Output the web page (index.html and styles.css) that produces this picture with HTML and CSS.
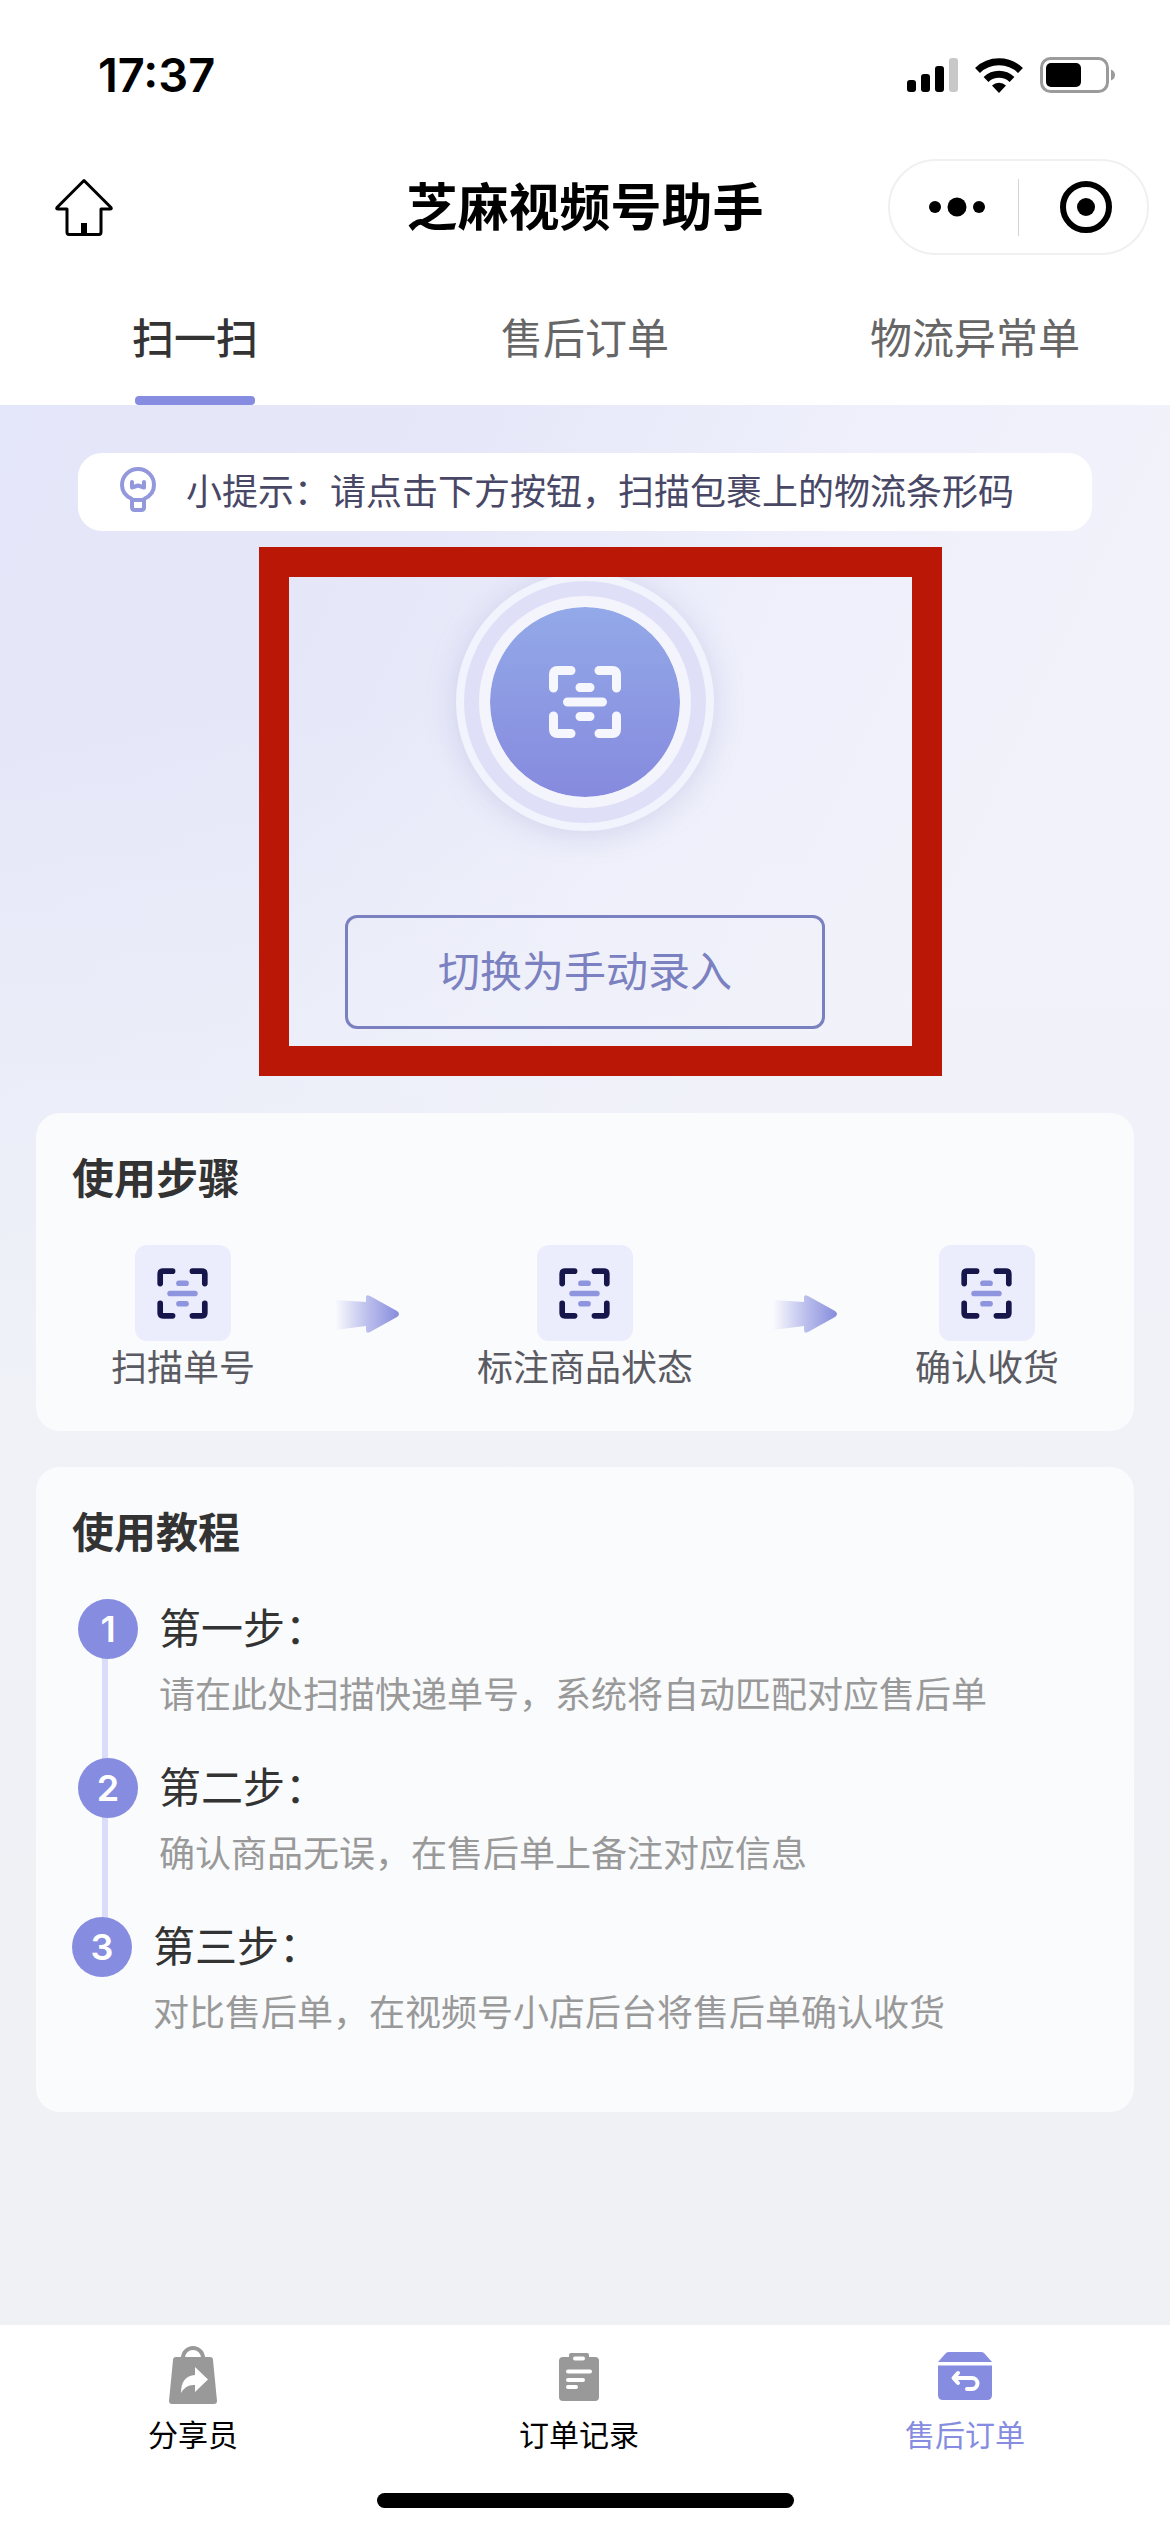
FILE: index.html
```html
<!DOCTYPE html>
<html lang="zh-CN">
<head>
<meta charset="utf-8">
<meta name="viewport" content="width=device-width, initial-scale=1">
<title>芝麻视频号助手</title>
<link rel="stylesheet" href="styles.css">
</head>
<body>
<svg class="sprite" aria-hidden="true">
  <symbol id="scan" viewBox="0 0 72 72">
    <g class="scan-corners" fill="none" stroke-linecap="round" stroke-linejoin="round">
      <path d="M4.500 22V8.500Q4.500 4.500 8.500 4.500H22"/>
      <path d="M50 4.500H63.500Q67.500 4.500 67.500 8.500V22"/>
      <path d="M67.500 50V63.500Q67.500 67.500 63.500 67.500H50"/>
      <path d="M22 67.500H8.500Q4.500 67.500 4.500 63.500V50"/>
    </g>
    <g class="scan-bars" fill="none" stroke-linecap="round">
      <path d="M31 21.500H41M18.500 36H53.500M31 50.500H41"/>
    </g>
  </symbol>
  <symbol id="arrow" viewBox="0 0 66 54">
    <path fill="url(#arrow-fade)" d="M2 7L33 9V4Q33 1 37 3L64 18Q68 21 64 24L37 39Q33 41 33 37V33L2 37Z"/>
  </symbol>
  <defs>
    <linearGradient id="arrow-fade" x1="0" x2="1" y1="0" y2="0">
      <stop offset="0" stop-color="#8a8fdf" stop-opacity="0"/>
      <stop offset=".5" stop-color="#8a90df" stop-opacity=".55"/>
      <stop offset="1" stop-color="#868cdc"/>
    </linearGradient>
  </defs>
</svg>

<header class="top">
  <div class="status">
    <time class="clock">17:37</time>
    <div class="status-icons">
      <svg width="51" height="36" viewBox="0 0 51 36" aria-label="信号">
        <rect x="0" y="23" width="9" height="12" rx="3"/>
        <rect x="14" y="17" width="9" height="18" rx="3"/>
        <rect x="28" y="9" width="9" height="26" rx="3"/>
        <rect x="42" y="1" width="9" height="34" rx="3" fill="#c8c8c8"/>
      </svg>
      <svg width="48" height="36" viewBox="0 0 48 36" aria-label="无线网络">
        <g fill="none" stroke="#000" stroke-width="7">
          <path d="M2.500 13.500A31 31 0 0 1 45.500 13.500"/>
          <path d="M11 22.500A19 19 0 0 1 37 22.500"/>
        </g>
        <path d="M24 36L17 28.500A10 10 0 0 1 31 28.500Z"/>
      </svg>
      <svg width="76" height="36" viewBox="0 0 76 36" aria-label="电池">
        <rect x="1.500" y="1.500" width="66" height="33" rx="9" fill="none" stroke="#9b9b9b" stroke-width="3"/>
        <rect x="6" y="6" width="35" height="24" rx="5"/>
        <path d="M71 12.500Q75 14 75 18T71 23.500Z" fill="#9b9b9b"/>
      </svg>
    </div>
  </div>
  <div class="nav">
    <button class="icon-button" type="button" aria-label="首页">
      <svg width="60" height="60" viewBox="0 0 60 60" fill="none" stroke="#000" stroke-width="3" stroke-linejoin="round">
        <path d="M30 3.500L57 30.500Q58 32 56 32H47V55Q47 57.500 45 57.500H15Q13 57.500 13 55V32H4Q2 32 3 30.500Z"/>
        <path d="M30 46V57" stroke-width="6"/>
      </svg>
    </button>
    <h1 class="nav-title">芝麻视频号助手</h1>
    <div class="capsule">
      <button class="capsule-button" type="button" aria-label="更多">
        <svg width="60" height="60" viewBox="0 0 60 60"><circle cx="8" cy="30" r="6"/><circle cx="30" cy="30" r="9.500"/><circle cx="52" cy="30" r="6"/></svg>
      </button>
      <button class="capsule-button" type="button" aria-label="关闭">
        <svg width="60" height="60" viewBox="0 0 60 60"><circle cx="30" cy="30" r="23" fill="none" stroke="#000" stroke-width="6"/><circle cx="30" cy="30" r="9"/></svg>
      </button>
    </div>
  </div>
  <nav class="tabs">
    <a class="tab tab-active" href="#scan-page">扫一扫</a>
    <a class="tab" href="#orders">售后订单</a>
    <a class="tab" href="#abnormal">物流异常单</a>
  </nav>
</header>

<main class="page" id="scan-page">
  <p class="tip">
    <svg width="36" height="45" viewBox="0 0 36 45" fill="none" stroke="#9398dd" stroke-width="4" stroke-linejoin="round" stroke-linecap="round">
      <path d="M12 32Q2 27.500 2 18A16 16 0 0 1 34 18Q34 27.500 24 32"/>
      <path d="M12 33H24V40Q24 43 21.500 43H14.500Q12 43 12 40Z"/>
      <path d="M12 15V20.500L18 18.500L24 20.500V15"/>
    </svg>
    <span>小提示：请点击下方按钮，扫描包裹上的物流条形码</span>
  </p>

  <section class="scanner">
    <button class="scan-button" type="button" aria-label="扫描">
      <span class="scan-core"><svg class="scan-icon" width="72" height="72"><use href="#scan"/></svg></span>
    </button>
    <button class="manual-button" type="button">切换为手动录入</button>
    <div class="highlight"></div>
  </section>

  <section class="card">
    <h2 class="card-title">使用步骤</h2>
    <div class="flow">
      <div class="flow-item">
        <span class="tile"><svg class="tile-icon" width="51" height="51"><use href="#scan"/></svg></span>
        <span>扫描单号</span>
      </div>
      <svg width="66" height="54"><use href="#arrow"/></svg>
      <div class="flow-item">
        <span class="tile"><svg class="tile-icon" width="51" height="51"><use href="#scan"/></svg></span>
        <span>标注商品状态</span>
      </div>
      <svg width="66" height="54"><use href="#arrow"/></svg>
      <div class="flow-item">
        <span class="tile"><svg class="tile-icon" width="51" height="51"><use href="#scan"/></svg></span>
        <span>确认收货</span>
      </div>
    </div>
  </section>

  <section class="card">
    <h2 class="card-title">使用教程</h2>
    <ol class="guide">
      <li class="guide-step">
        <span class="guide-number">1</span>
        <div class="guide-text">
          <h3 class="guide-title">第一步：</h3>
          <p class="guide-note">请在此处扫描快递单号，系统将自动匹配对应售后单</p>
        </div>
      </li>
      <li class="guide-step">
        <span class="guide-number">2</span>
        <div class="guide-text">
          <h3 class="guide-title">第二步：</h3>
          <p class="guide-note">确认商品无误，在售后单上备注对应信息</p>
        </div>
      </li>
      <li class="guide-step">
        <span class="guide-number">3</span>
        <div class="guide-text">
          <h3 class="guide-title">第三步：</h3>
          <p class="guide-note">对比售后单，在视频号小店后台将售后单确认收货</p>
        </div>
      </li>
    </ol>
  </section>
</main>

<footer class="bottom">
  <nav class="tabbar">
    <a class="tabbar-item" href="#share">
      <svg width="60" height="60" viewBox="0 0 60 60">
        <path d="M20 16V15A10 10 0 0 1 40 15V16" fill="none" stroke="#999" stroke-width="4"/>
        <path d="M13 14H47Q50 14 50 17L54 58Q54 61 51 61H9Q6 61 6 58L10 17Q10 14 13 14Z" fill="#999"/>
        <path d="M32 24L45 36.500L32 49V42Q23 41 18 50Q18 33 32 32Z" fill="#fff"/>
      </svg>
      <span>分享员</span>
    </a>
    <a class="tabbar-item" href="#records">
      <svg width="60" height="60" viewBox="0 0 60 60">
        <rect x="10" y="14" width="40" height="44" rx="4" fill="#999"/>
        <rect x="20" y="10" width="20" height="9" rx="2" fill="#999"/>
        <path d="M26 15.500H34M19 28.500H41M19 37H34M19 44H27" stroke="#fff" stroke-width="4" stroke-linecap="round"/>
      </svg>
      <span>订单记录</span>
    </a>
    <a class="tabbar-item tabbar-current" href="#after-sale">
      <svg width="60" height="60" viewBox="0 0 60 60">
        <path d="M3 19L11 10Q12 9 14 9H46Q48 9 49 10L57 19Z" fill="#868de0"/>
        <path d="M3 22.500H57V52Q57 57 52 57H8Q3 57 3 52Z" fill="#868de0"/>
        <path d="M23 30L18.500 35L23 40M19 35H37A5.500 5.500 0 0 1 37 46H32" fill="none" stroke="#fff" stroke-width="4" stroke-linecap="round" stroke-linejoin="round"/>
      </svg>
      <span>售后订单</span>
    </a>
  </nav>
  <div class="home-indicator"></div>
</footer>
</body>
</html>
```

FILE: styles.css
```css
* {
  box-sizing: border-box;
}

body {
  display: flex;
  flex-direction: column;
  min-height: 100vh;
  margin: 0;
  background: #fff;
  color: #333;
  font-family: "Noto Sans CJK SC", sans-serif;
  font-size: 36px;
  line-height: 54px;
}

h1,
h2,
h3,
p,
ol {
  margin: 0;
  padding: 0;
}

button {
  padding: 0;
  border: 0;
  background: none;
  color: inherit;
  font: inherit;
}

a {
  color: inherit;
  text-decoration: none;
}

svg {
  display: block;
  flex: none;
}

.sprite {
  position: absolute;
  width: 0;
  height: 0;
}

/* Status bar and title bar */

.status {
  display: flex;
  align-items: center;
  justify-content: space-between;
  height: 144px;
  padding: 6px 54px 0 98px;
}

.clock {
  color: #000;
  font-family: Inter, sans-serif;
  font-size: 47px;
  font-weight: 600;
}

.status-icons {
  display: flex;
  gap: 17px;
}

.nav {
  display: grid;
  grid-template-columns: 1fr auto 1fr;
  align-items: center;
  height: 126px;
  padding: 0 21px 0 54px;
}

.icon-button {
  justify-self: start;
}

.nav-title {
  /* the side paddings differ by 33px */
  margin-right: 33px;
  padding-bottom: 6px;
  color: #000;
  font-size: 51px;
  font-weight: 700;
  line-height: 60px;
}

.capsule {
  display: flex;
  justify-self: end;
  align-items: center;
  width: 261px;
  height: 96px;
  border: 2px solid #f0f0f0;
  border-radius: 48px;
}

.capsule-button {
  display: flex;
  flex: 1;
  align-items: center;
  justify-content: center;
  height: 57px;
  padding-left: 6px;
}

.capsule-button + .capsule-button {
  border-left: 1px solid #d4d4d4;
}

.tabs {
  display: grid;
  grid-template-columns: repeat(3, 1fr);
  padding-top: 36px;
}

.tab {
  display: flex;
  flex-direction: column;
  align-items: center;
  gap: 30px;
  color: #666;
  font-size: 42px;
  line-height: 60px;
}

.tab::after {
  width: 120px;
  height: 9px;
  border-radius: 4px;
  content: "";
}

.tab-active {
  color: #333;
  font-weight: 500;
}

.tab-active::after {
  background: #868de0;
}

/* Page */

.page {
  display: flex;
  flex: 1;
  flex-direction: column;
  gap: 36px;
  padding: 48px 36px;
  background:
    linear-gradient(to bottom, rgba(240, 242, 247, 0) 300px, #f0f2f8 1000px, #f0f1f5 1500px),
    linear-gradient(115deg, #e4e6f9 0, #e6e8f9 450px, #eeeffb 760px, #f2f2fb 1100px);
}

.tip {
  display: flex;
  align-items: center;
  gap: 30px;
  margin: 0 42px;
  padding: 9px 42px 15px;
  border-radius: 24px;
  background: #fff;
  color: #484866;
}

.scanner {
  position: relative;
  display: flex;
  flex-direction: column;
  align-items: center;
  gap: 84px;
  padding: 6px 0 48px;
}

.scan-button {
  display: flex;
  align-items: center;
  justify-content: center;
  width: 258px;
  height: 258px;
  border: 8px solid #f1f4fc;
  border-radius: 50%;
  background: #dfe0f8;
  box-shadow: 0 3px 30px rgba(134, 141, 200, .28);
}

.scan-core {
  display: flex;
  align-items: center;
  justify-content: center;
  width: 212px;
  height: 212px;
  border: 11px solid #f3f4fc;
  border-radius: 50%;
  background: linear-gradient(#93a9e8, #868ade) padding-box;
}

.scan-icon {
  stroke: #f6f7fe;
  stroke-width: 9px;
}

.manual-button {
  width: 480px;
  height: 114px;
  padding-bottom: 6px;
  border: 3px solid #7b81c0;
  border-radius: 12px;
  color: #7b81c0;
  font-size: 42px;
}

.highlight {
  position: absolute;
  inset: -20px 192px 1px 223px;
  border: 30px solid #ba1706;
  pointer-events: none;
}

/* Cards */

.card {
  display: flex;
  flex-direction: column;
  gap: 39px;
  padding: 33px 36px 36px;
  border-radius: 24px;
  background: #fafbfd;
}

.card-title {
  font-size: 42px;
  font-weight: 700;
  line-height: 60px;
}

.flow {
  display: flex;
  align-items: center;
  justify-content: space-around;
}

.flow-item {
  display: flex;
  flex-direction: column;
  align-items: center;
  padding-bottom: 6px;
  color: #5a5a62;
  line-height: 48px;
}

.tile {
  display: flex;
  align-items: center;
  justify-content: center;
  width: 96px;
  height: 96px;
  border-radius: 12px;
  background: #ebecfc;
}

.tile-icon {
  stroke: #8e94dd;
  stroke-width: 8px;
}

.tile-icon use {
  --corner: #16164a;
}

.scan-corners {
  stroke: var(--corner, inherit);
}

/* Guide */

.guide {
  padding-left: 30px;
  list-style: none;
}

.guide-step {
  display: flex;
  gap: 21px;
  padding-bottom: 39px;
  border-left: 6px solid #dadcfa;
}

.guide-step:last-child {
  border-left: 0;
}

.guide-number {
  flex: none;
  width: 60px;
  height: 60px;
  margin-left: -30px;
  border-radius: 50%;
  background: #868de0;
  color: #fff;
  font-family: Inter, sans-serif;
  font-weight: 600;
  line-height: 60px;
  text-align: center;
}

.guide-text {
  display: flex;
  flex-direction: column;
  gap: 12px;
}

.guide-title {
  font-size: 42px;
  font-weight: 400;
  line-height: 54px;
}

.guide-note {
  color: #999;
}

/* Bottom bar */

.bottom {
  padding: 18px 0 24px;
}

.tabbar {
  display: grid;
  grid-template-columns: repeat(3, 1fr);
  padding-right: 12px;
}

.tabbar-item {
  display: flex;
  flex-direction: column;
  align-items: center;
  gap: 9px;
  color: #000;
  font-size: 30px;
  line-height: 42px;
}

.tabbar-item svg {
  overflow: visible;
}

.tabbar-current {
  color: #868de0;
}

.home-indicator {
  width: 417px;
  height: 15px;
  margin: 39px auto 0;
  border-radius: 8px;
  background: #000;
}
```
